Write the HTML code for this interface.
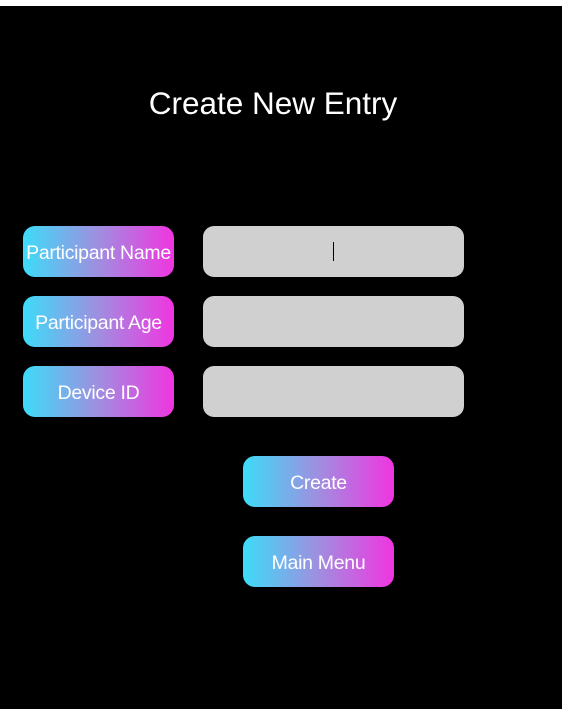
<!DOCTYPE html>
<html><head><style>
body{margin:0;width:562px;height:709px;background:#000;position:relative;overflow:hidden;font-family:"Liberation Sans",sans-serif}
.top{position:absolute;left:0;top:0;width:562px;height:6px;background:#fff}
h1{position:absolute;left:0;width:546px;top:85px;margin:0;text-align:center;color:#fff;font-weight:normal;font-size:31.5px;line-height:36px}
.b{position:absolute;width:151px;height:51px;border-radius:12px;background:linear-gradient(90deg,#3ddcf8,#a08ee0 50%,#f035e0);color:#fff;font-size:19.5px;line-height:54px;text-align:center;white-space:nowrap;letter-spacing:-0.3px}
.i{position:absolute;left:203px;width:261px;height:51px;border-radius:11px;background:#d0d0d0}
</style></head><body>
<div class="top"></div>
<h1>Create New Entry</h1>
<div class="b" style="left:23px;top:226px">Participant Name</div>
<div class="b" style="left:23px;top:296px">Participant Age</div>
<div class="b" style="left:23px;top:366px">Device ID</div>
<div class="i" style="top:226px"><div style="position:absolute;left:130px;top:16px;width:1px;height:19px;background:#000"></div></div>
<div class="i" style="top:296px"></div>
<div class="i" style="top:366px"></div>
<div class="b" style="left:243px;top:456px">Create</div>
<div class="b" style="left:243px;top:536px">Main Menu</div>
</body></html>
